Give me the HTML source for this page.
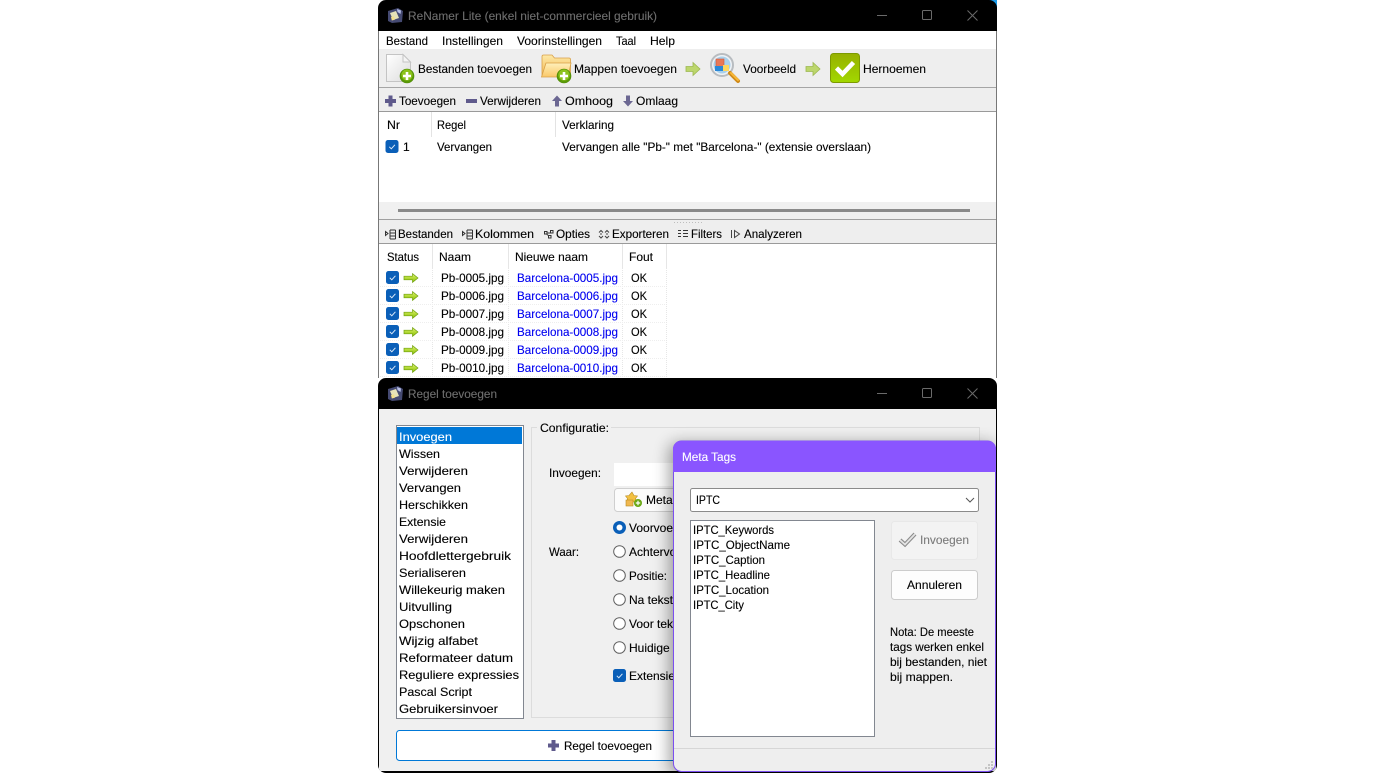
<!DOCTYPE html>
<html><head><meta charset="utf-8"><title>ReNamer Lite</title>
<style>
html,body{margin:0;padding:0;background:#fff;width:1374px;height:773px;overflow:hidden}
svg{display:block}
text{font-family:"Liberation Sans",sans-serif;font-size:12px;fill:#000;stroke:#000;stroke-width:.12;white-space:pre}
.t{fill:#6e6e6e;stroke:#6e6e6e}
.b{fill:#0000f0;stroke:#0000f0}
.w{fill:#fff;stroke:#fff}
.g{fill:#7c7c7c;stroke:#7c7c7c}
</style></head><body>
<svg xmlns="http://www.w3.org/2000/svg" width="1374" height="773" viewBox="0 0 1374 773">
<defs>
<linearGradient id="page" x1="0" y1="0" x2="1" y2="1"><stop offset="0" stop-color="#fff"/><stop offset="1" stop-color="#dcdcdc"/></linearGradient>
<linearGradient id="fold" x1="0" y1="0" x2="0" y2="1"><stop offset="0" stop-color="#fde9a8"/><stop offset="1" stop-color="#f4b850"/></linearGradient>
<linearGradient id="fold2" x1="0" y1="0" x2="0" y2="1"><stop offset="0" stop-color="#fff0bb"/><stop offset="1" stop-color="#fac868"/></linearGradient>
<linearGradient id="grn" x1="0" y1="0" x2="0" y2="1"><stop offset="0" stop-color="#96b000"/><stop offset="1" stop-color="#a2d800"/></linearGradient>
<linearGradient id="arr" x1="0" y1="0" x2="0" y2="1"><stop offset="0" stop-color="#e0f470"/><stop offset="1" stop-color="#88c000"/></linearGradient>
<filter id="bl" x="-20%" y="-20%" width="140%" height="140%"><feGaussianBlur stdDeviation="8"/></filter>
<clipPath id="w1"><path d="M378 378V8a8 8 0 0 1 8-8H989a8 8 0 0 1 8 8V378z"/></clipPath>
<clipPath id="w2"><path d="M378 386a8 8 0 0 1 8-8H989a8 8 0 0 1 8 8V765a8 8 0 0 1-8 8H386a8 8 0 0 1-8-8z"/></clipPath>
<g id="plusb"><circle cx="0" cy="0" r="7" fill="#5a9a08" stroke="#4c8800" stroke-width=".6"/><circle cx="0" cy="-1" r="5.6" fill="#8cc21c"/><path d="M-4-1.300H-1.300V-4H1.300V-1.300H4V1.300H1.300V4H-1.300V1.300H-4z" fill="#fff"/></g>
<g id="chk"><rect x="0" y="0" width="13" height="13" rx="2.500" fill="#0a5fb8"/><path d="M3.800 6.800l2 2 3.600-4" fill="none" stroke="#dbe9f8" stroke-width="1"/></g>
<g id="ga"><path d="M0 3.200H8.500V.6L14 5 8.500 9.400V6.800H0z" fill="url(#arr)" stroke="#70a010" stroke-width=".7"/></g>
<g id="ta"><path d="M0 4H7V0L14 6.500 7 13V9H0z" fill="#bcd66c" stroke="#9cb850" stroke-width=".8"/></g>
<g id="rad"><circle cx="0" cy="0" r="5.800" fill="#fff" stroke="#606060" stroke-width="1"/></g>
<g id="pp"><path d="M3.500 0H7.500V3.500H11V7.500H7.500V11H3.500V7.500H0V3.500H3.500z" fill="#5f5a8c"/></g>
<g id="lst"><path d="M0 2L2.500 4 0 6zM4.500 0.500H10M4.500 3.500H10M4.500 6.500H10M4.500 9.500H10M4.500 .5V9.500M10 .5V9.500" fill="none" stroke="#333" stroke-width="1"/></g>
<g id="appi"><path d="M0 3L10 0 15 3 14 14 4 15 0 13z" fill="#454a72"/><path d="M2 5L8 3 11 10 5 12z" fill="#e6e2b8"/><path d="M9 1L13 2.500 12.500 6 9.500 4z" fill="#b8c0e8"/><path d="M3 9l3-.8.8 3.500-3 .8z" fill="#f3e08a"/></g>
</defs>

<rect width="1374" height="773" fill="#fff"/>
<rect x="988" y="0" width="9" height="8" fill="#1a9bea"/>

<!-- Main window -->
<g clip-path="url(#w1)">
<rect x="378" y="0" width="619" height="378" fill="#000"/>
<rect x="378" y="31" width="619" height="347" fill="#777"/>
<rect x="379" y="31" width="617" height="347" fill="#fff"/>
<rect x="379" y="49" width="617" height="38" fill="#eeeeee"/>
<rect x="379" y="87" width="617" height="1" fill="#a5a5a5"/>
<rect x="379" y="88" width="617" height="23" fill="#eeeeee"/>
<rect x="379" y="111" width="617" height="1" fill="#9a9a9a"/>
<rect x="379" y="202" width="617" height="17" fill="#f0f0f0"/>
<rect x="398" y="209" width="572" height="3" fill="#8a8a8a"/>
<rect x="379" y="219" width="617" height="1" fill="#a0a0a0"/>
<rect x="379" y="220" width="617" height="23" fill="#eeeeee"/>
<rect x="379" y="243" width="617" height="1" fill="#9a9a9a"/>
</g>
<g fill="#bdbdbd"><rect x="674" y="222" width="1" height="1"/><rect x="677" y="222" width="1" height="1"/><rect x="680" y="222" width="1" height="1"/><rect x="683" y="222" width="1" height="1"/><rect x="686" y="222" width="1" height="1"/><rect x="689" y="222" width="1" height="1"/><rect x="692" y="222" width="1" height="1"/><rect x="695" y="222" width="1" height="1"/><rect x="698" y="222" width="1" height="1"/><rect x="701" y="222" width="1" height="1"/></g>

<use href="#appi" x="388" y="8"/>
<text class="t" x="408" y="20" textLength="249" lengthAdjust="spacingAndGlyphs">ReNamer Lite (enkel niet-commercieel gebruik)</text>
<path d="M877 15.500H887" stroke="#6a6a6a"/>
<rect x="922.500" y="10.500" width="9" height="9" rx="1" fill="none" stroke="#6a6a6a"/>
<path d="M967.500 10.500l10 10M977.500 10.500l-10 10" stroke="#6a6a6a" fill="none"/>

<text x="386" y="45" textLength="42" lengthAdjust="spacingAndGlyphs">Bestand</text>
<text x="442" y="45" textLength="61" lengthAdjust="spacingAndGlyphs">Instellingen</text>
<text x="517" y="45" textLength="85" lengthAdjust="spacingAndGlyphs">Voorinstellingen</text>
<text x="616" y="45" textLength="20" lengthAdjust="spacingAndGlyphs">Taal</text>
<text x="650" y="45" textLength="25" lengthAdjust="spacingAndGlyphs">Help</text>

<!-- big toolbar -->
<path d="M386.500 54.500H403L410.500 62V81.500H386.500z" fill="url(#page)" stroke="#c4c4c4"/>
<path d="M403 54.500V62H410.500z" fill="#f4f4f4" stroke="#c4c4c4"/>
<use href="#plusb" x="407" y="76"/>
<text x="418" y="73" textLength="114" lengthAdjust="spacingAndGlyphs">Bestanden toevoegen</text>

<path d="M542 56.500a1.500 1.500 0 0 1 1.500-1.500H552l2.500 3H569a1.500 1.500 0 0 1 1.500 1.500V76H542z" fill="url(#fold)" stroke="#d8a048" stroke-width=".8"/>
<path d="M546 63H571L568 77H541.500z" fill="url(#fold2)" stroke="#d8a048" stroke-width=".8"/>
<use href="#plusb" x="564" y="76"/>
<text x="574" y="73" textLength="103" lengthAdjust="spacingAndGlyphs">Mappen toevoegen</text>

<use href="#ta" x="686" y="62.500"/>
<circle cx="722" cy="65" r="11" fill="#eef2f6" stroke="#b8bcc0" stroke-width="2"/>
<circle cx="722" cy="65" r="8.500" fill="#a8d0ec"/>
<rect x="716" y="59" width="8" height="8" fill="#e87858" stroke="#d05838" stroke-width=".6"/>
<rect x="715" y="66" width="8" height="5" fill="#2a88d8"/>
<rect x="723" y="65" width="6" height="6" fill="#fcd860"/>
<path d="M730 73l8 8" stroke="#d08a18" stroke-width="4" stroke-linecap="round"/>
<path d="M731 73l7 7" stroke="#f8b838" stroke-width="2" stroke-linecap="round"/>
<text x="743" y="73" textLength="53" lengthAdjust="spacingAndGlyphs">Voorbeeld</text>

<use href="#ta" x="806" y="62.500"/>
<rect x="830.500" y="53.500" width="29" height="29" rx="3" fill="url(#grn)" stroke="#7c9a00"/>
<path d="M836.500 68l6 6 11-11.500" fill="none" stroke="#fff" stroke-width="4.500"/>
<text x="863" y="73" textLength="63" lengthAdjust="spacingAndGlyphs">Hernoemen</text>

<!-- rules toolbar -->
<use href="#pp" x="385" y="95.500"/>
<text x="399" y="105" textLength="57" lengthAdjust="spacingAndGlyphs">Toevoegen</text>
<rect x="466" y="99" width="11" height="4" fill="#5f5a8c"/>
<text x="480" y="105" textLength="61" lengthAdjust="spacingAndGlyphs">Verwijderen</text>
<path d="M557 95.500l5 5.500h-3v5.500h-4V101h-3z" fill="#6b6792"/>
<text x="565" y="105" textLength="48" lengthAdjust="spacingAndGlyphs">Omhoog</text>
<path d="M628 106.500l5-5.500h-3v-5.500h-4V101h-3z" fill="#6b6792"/>
<text x="636" y="105" textLength="42" lengthAdjust="spacingAndGlyphs">Omlaag</text>

<!-- rule table -->
<text x="387" y="129" textLength="13" lengthAdjust="spacingAndGlyphs">Nr</text>
<text x="437" y="129" textLength="29" lengthAdjust="spacingAndGlyphs">Regel</text>
<text x="562" y="129" textLength="52" lengthAdjust="spacingAndGlyphs">Verklaring</text>
<rect x="431" y="112" width="1" height="25" fill="#e3e3e3"/>
<rect x="555" y="112" width="1" height="25" fill="#e3e3e3"/>
<use href="#chk" x="385.500" y="140"/>
<text x="403" y="151">1</text>
<text x="437" y="151" textLength="55" lengthAdjust="spacingAndGlyphs">Vervangen</text>
<text x="562" y="151" textLength="309" lengthAdjust="spacingAndGlyphs">Vervangen alle "Pb-" met "Barcelona-" (extensie overslaan)</text>

<!-- files toolbar -->
<use href="#lst" x="385.500" y="229.500"/>
<text x="398" y="238" textLength="55" lengthAdjust="spacingAndGlyphs">Bestanden</text>
<use href="#lst" x="462.500" y="229.500"/>
<text x="475" y="238" textLength="59" lengthAdjust="spacingAndGlyphs">Kolommen</text>
<path d="M544.500 231.500h2.500v2.500h-2.500zM550.500 230.500h2.500v2.500h-2.500zM548.500 235.500h2.500v2.500h-2.500zM547 233h3.500M546.500 234l2.500 2" fill="none" stroke="#333"/>
<text x="556" y="238" textLength="34" lengthAdjust="spacingAndGlyphs">Opties</text>
<path d="M599 232.500l2-2 2 2M599 236l2 2 2-2M605 232.500l2-2 2 2M605 236l2 2 2-2M601 233v2M607 233v2" fill="none" stroke="#444"/>
<text x="612" y="238" textLength="57" lengthAdjust="spacingAndGlyphs">Exporteren</text>
<path d="M678 230.500h3M678 233.500h3M678 236.500h3M683 230.500h5M683 233.500h5M683 236.500h5" fill="none" stroke="#333"/>
<text x="691" y="238" textLength="31" lengthAdjust="spacingAndGlyphs">Filters</text>
<path d="M731.500 230v8M734.500 230.500l5 3.500-5 3.500z" fill="none" stroke="#444"/>
<text x="744" y="238" textLength="58" lengthAdjust="spacingAndGlyphs">Analyzeren</text>

<!-- file table -->
<text x="387" y="261" textLength="32" lengthAdjust="spacingAndGlyphs">Status</text>
<text x="439" y="261" textLength="32" lengthAdjust="spacingAndGlyphs">Naam</text>
<text x="515" y="261" textLength="73" lengthAdjust="spacingAndGlyphs">Nieuwe naam</text>
<text x="629" y="261" textLength="24" lengthAdjust="spacingAndGlyphs">Fout</text>
<g fill="#e6e6e6"><rect x="432" y="244" width="1" height="24"/><rect x="508" y="244" width="1" height="24"/><rect x="622" y="244" width="1" height="24"/><rect x="666" y="244" width="1" height="24"/></g>
<g stroke="#e6e6e6" stroke-dasharray="1 1"><path d="M432.500 268V378M508.500 268V378M622.500 268V378M666.500 268V378"/></g>
<g stroke="#eeeeee" stroke-dasharray="1 1"><path d="M380 286.500H666M380 304.500H666M380 322.500H666M380 340.500H666M380 358.500H666M380 376.500H666"/></g>

<use href="#chk" x="386" y="271"/><use href="#ga" x="404" y="273"/>
<text x="441" y="282" textLength="63" lengthAdjust="spacingAndGlyphs">Pb-0005.jpg</text><text class="b" x="517" y="282" textLength="101" lengthAdjust="spacingAndGlyphs">Barcelona-0005.jpg</text><text x="631" y="282" textLength="16" lengthAdjust="spacingAndGlyphs">OK</text>
<use href="#chk" x="386" y="289"/><use href="#ga" x="404" y="291"/>
<text x="441" y="300" textLength="63" lengthAdjust="spacingAndGlyphs">Pb-0006.jpg</text><text class="b" x="517" y="300" textLength="101" lengthAdjust="spacingAndGlyphs">Barcelona-0006.jpg</text><text x="631" y="300" textLength="16" lengthAdjust="spacingAndGlyphs">OK</text>
<use href="#chk" x="386" y="307"/><use href="#ga" x="404" y="309"/>
<text x="441" y="318" textLength="63" lengthAdjust="spacingAndGlyphs">Pb-0007.jpg</text><text class="b" x="517" y="318" textLength="101" lengthAdjust="spacingAndGlyphs">Barcelona-0007.jpg</text><text x="631" y="318" textLength="16" lengthAdjust="spacingAndGlyphs">OK</text>
<use href="#chk" x="386" y="325"/><use href="#ga" x="404" y="327"/>
<text x="441" y="336" textLength="63" lengthAdjust="spacingAndGlyphs">Pb-0008.jpg</text><text class="b" x="517" y="336" textLength="101" lengthAdjust="spacingAndGlyphs">Barcelona-0008.jpg</text><text x="631" y="336" textLength="16" lengthAdjust="spacingAndGlyphs">OK</text>
<use href="#chk" x="386" y="343"/><use href="#ga" x="404" y="345"/>
<text x="441" y="354" textLength="63" lengthAdjust="spacingAndGlyphs">Pb-0009.jpg</text><text class="b" x="517" y="354" textLength="101" lengthAdjust="spacingAndGlyphs">Barcelona-0009.jpg</text><text x="631" y="354" textLength="16" lengthAdjust="spacingAndGlyphs">OK</text>
<use href="#chk" x="386" y="361"/><use href="#ga" x="404" y="363"/>
<text x="441" y="372" textLength="63" lengthAdjust="spacingAndGlyphs">Pb-0010.jpg</text><text class="b" x="517" y="372" textLength="101" lengthAdjust="spacingAndGlyphs">Barcelona-0010.jpg</text><text x="631" y="372" textLength="16" lengthAdjust="spacingAndGlyphs">OK</text>

<!-- Regel toevoegen window -->
<g clip-path="url(#w2)">
<rect x="378" y="378" width="619" height="395" fill="#000"/>
<rect x="379" y="409" width="617" height="362" fill="#f0f0f0"/>
</g>
<use href="#appi" x="388" y="386"/>
<text class="t" x="408" y="398" textLength="89" lengthAdjust="spacingAndGlyphs">Regel toevoegen</text>
<path d="M877 393.500H887" stroke="#6a6a6a"/>
<rect x="922.500" y="388.500" width="9" height="9" rx="1" fill="none" stroke="#6a6a6a"/>
<path d="M967.500 388.500l10 10M977.500 388.500l-10 10" stroke="#6a6a6a" fill="none"/>

<rect x="396.500" y="425.500" width="127" height="293" fill="#fff" stroke="#828790"/>
<rect x="397" y="427" width="125" height="17" fill="#0078d7"/>
<text class="w" x="399" y="441" textLength="53" lengthAdjust="spacingAndGlyphs">Invoegen</text>
<text x="399" y="458" textLength="41" lengthAdjust="spacingAndGlyphs">Wissen</text>
<text x="399" y="475" textLength="69" lengthAdjust="spacingAndGlyphs">Verwijderen</text>
<text x="399" y="492" textLength="62" lengthAdjust="spacingAndGlyphs">Vervangen</text>
<text x="399" y="509" textLength="69" lengthAdjust="spacingAndGlyphs">Herschikken</text>
<text x="399" y="526" textLength="47" lengthAdjust="spacingAndGlyphs">Extensie</text>
<text x="399" y="543" textLength="69" lengthAdjust="spacingAndGlyphs">Verwijderen</text>
<text x="399" y="560" textLength="112" lengthAdjust="spacingAndGlyphs">Hoofdlettergebruik</text>
<text x="399" y="577" textLength="67" lengthAdjust="spacingAndGlyphs">Serialiseren</text>
<text x="399" y="594" textLength="106" lengthAdjust="spacingAndGlyphs">Willekeurig maken</text>
<text x="399" y="611" textLength="53" lengthAdjust="spacingAndGlyphs">Uitvulling</text>
<text x="399" y="628" textLength="66" lengthAdjust="spacingAndGlyphs">Opschonen</text>
<text x="399" y="645" textLength="79" lengthAdjust="spacingAndGlyphs">Wijzig alfabet</text>
<text x="399" y="662" textLength="114" lengthAdjust="spacingAndGlyphs">Reformateer datum</text>
<text x="399" y="679" textLength="120" lengthAdjust="spacingAndGlyphs">Reguliere expressies</text>
<text x="399" y="696" textLength="73" lengthAdjust="spacingAndGlyphs">Pascal Script</text>
<text x="399" y="713" textLength="99" lengthAdjust="spacingAndGlyphs">Gebruikersinvoer</text>

<rect x="531.500" y="427.500" width="448" height="290" fill="none" stroke="#dcdcdc"/>
<rect x="537" y="420" width="74" height="14" fill="#f0f0f0"/>
<text x="540" y="432" textLength="69" lengthAdjust="spacingAndGlyphs">Configuratie:</text>

<text x="549" y="477" textLength="52" lengthAdjust="spacingAndGlyphs">Invoegen:</text>
<rect x="614" y="463" width="300" height="23" fill="#fff"/>
<rect x="614.500" y="488.500" width="150" height="23" rx="3" fill="#fbfbfb" stroke="#cfcfcf"/>
<path d="M632 492l2 3.500 3.500.5-2 2.500.5 3.500H627l.5-3.500-2-2.500 3.500-.5z" fill="#f2c040" stroke="#b88a20" stroke-width=".6"/>
<rect x="626" y="500" width="7" height="6" fill="#f0b850" stroke="#b88a20" stroke-width=".6"/>
<circle cx="638" cy="503" r="4" fill="#6aa814"/><path d="M635.800 503h4.400M638 500.800v4.400" stroke="#fff" stroke-width="1.200"/>
<text x="646" y="504">Meta Tags</text>

<text x="549" y="556" textLength="30" lengthAdjust="spacingAndGlyphs">Waar:</text>
<circle cx="619.500" cy="527.500" r="6.500" fill="#0a5fb8"/><circle cx="619.500" cy="527.500" r="3" fill="#fff"/>
<text x="629" y="532">Voorvoegen</text>
<use href="#rad" x="619.500" y="551.500"/><text x="629" y="556">Achtervoegen</text>
<use href="#rad" x="619.500" y="575.500"/><text x="629" y="580" textLength="38" lengthAdjust="spacingAndGlyphs">Positie:</text>
<use href="#rad" x="619.500" y="599.500"/><text x="629" y="604">Na tekst:</text>
<use href="#rad" x="619.500" y="623.500"/><text x="629" y="628">Voor tekst:</text>
<use href="#rad" x="619.500" y="647.500"/><text x="629" y="652">Huidige naam</text>
<use href="#chk" x="613" y="669"/><text x="629" y="680">Extensie overslaan</text>

<rect x="396.500" y="730.500" width="400" height="30" rx="3" fill="#fff" stroke="#0078d7"/>
<use href="#pp" x="548" y="740"/>
<text x="564" y="750" textLength="88" lengthAdjust="spacingAndGlyphs">Regel toevoegen</text>

<!-- Meta Tags dialog -->
<g clip-path="url(#w2)"><rect x="669" y="443" width="327" height="332" rx="8" fill="#000" opacity=".36" filter="url(#bl)"/></g>
<path d="M673.500 449a8 8 0 0 1 8-8H987.500a8 8 0 0 1 8 8V763.500a8 8 0 0 1-8 8H681.500a8 8 0 0 1-8-8z" fill="#eeeeee" stroke="#7b4ef0" stroke-width="1"/>
<path d="M673 472V449a8 8 0 0 1 8-8H988a8 8 0 0 1 8 8V472z" fill="#8a55ff"/>
<text class="w" x="682" y="461" textLength="54" lengthAdjust="spacingAndGlyphs">Meta Tags</text>

<rect x="690.500" y="488.500" width="288" height="23" rx="2" fill="#fff" stroke="#8a8a8a"/>
<text x="696" y="504" textLength="24" lengthAdjust="spacingAndGlyphs">IPTC</text>
<path d="M966 498l4 4 4-4" fill="none" stroke="#555"/>

<rect x="690.500" y="520.500" width="184" height="216" fill="#fff" stroke="#828790"/>
<text x="693" y="534" textLength="81" lengthAdjust="spacingAndGlyphs">IPTC_Keywords</text>
<text x="693" y="549" textLength="97" lengthAdjust="spacingAndGlyphs">IPTC_ObjectName</text>
<text x="693" y="564" textLength="72" lengthAdjust="spacingAndGlyphs">IPTC_Caption</text>
<text x="693" y="579" textLength="77" lengthAdjust="spacingAndGlyphs">IPTC_Headline</text>
<text x="693" y="594" textLength="76" lengthAdjust="spacingAndGlyphs">IPTC_Location</text>
<text x="693" y="609" textLength="51" lengthAdjust="spacingAndGlyphs">IPTC_City</text>

<rect x="891.500" y="521.500" width="86" height="38" rx="3" fill="#f3f3f3" stroke="#e8e8e8"/>
<path d="M900 540l5 4.500 10-10.500" fill="none" stroke="#8c8c8c" stroke-width="4"/>
<path d="M900 540l5 4.500 10-10.500" fill="none" stroke="#e4e4e4" stroke-width="1.800"/>
<text class="g" x="920" y="544" textLength="49" lengthAdjust="spacingAndGlyphs">Invoegen</text>
<rect x="891.500" y="570.500" width="86" height="29" rx="3" fill="#fdfdfd" stroke="#cccccc"/>
<text x="907" y="589" textLength="55" lengthAdjust="spacingAndGlyphs">Annuleren</text>

<text x="890" y="636" textLength="84" lengthAdjust="spacingAndGlyphs">Nota: De meeste</text>
<text x="890" y="651" textLength="94" lengthAdjust="spacingAndGlyphs">tags werken enkel</text>
<text x="890" y="666" textLength="97" lengthAdjust="spacingAndGlyphs">bij bestanden, niet</text>
<text x="890" y="681" textLength="63" lengthAdjust="spacingAndGlyphs">bij mappen.</text>

<rect x="674" y="748" width="321" height="1" fill="#d6d6d6"/>
<g fill="#c4c4c4"><rect x="991" y="761" width="2" height="2"/><rect x="988" y="764" width="2" height="2"/><rect x="991" y="764" width="2" height="2"/><rect x="985" y="767" width="2" height="2"/><rect x="988" y="767" width="2" height="2"/><rect x="991" y="767" width="2" height="2"/></g>
</svg>
</body></html>
